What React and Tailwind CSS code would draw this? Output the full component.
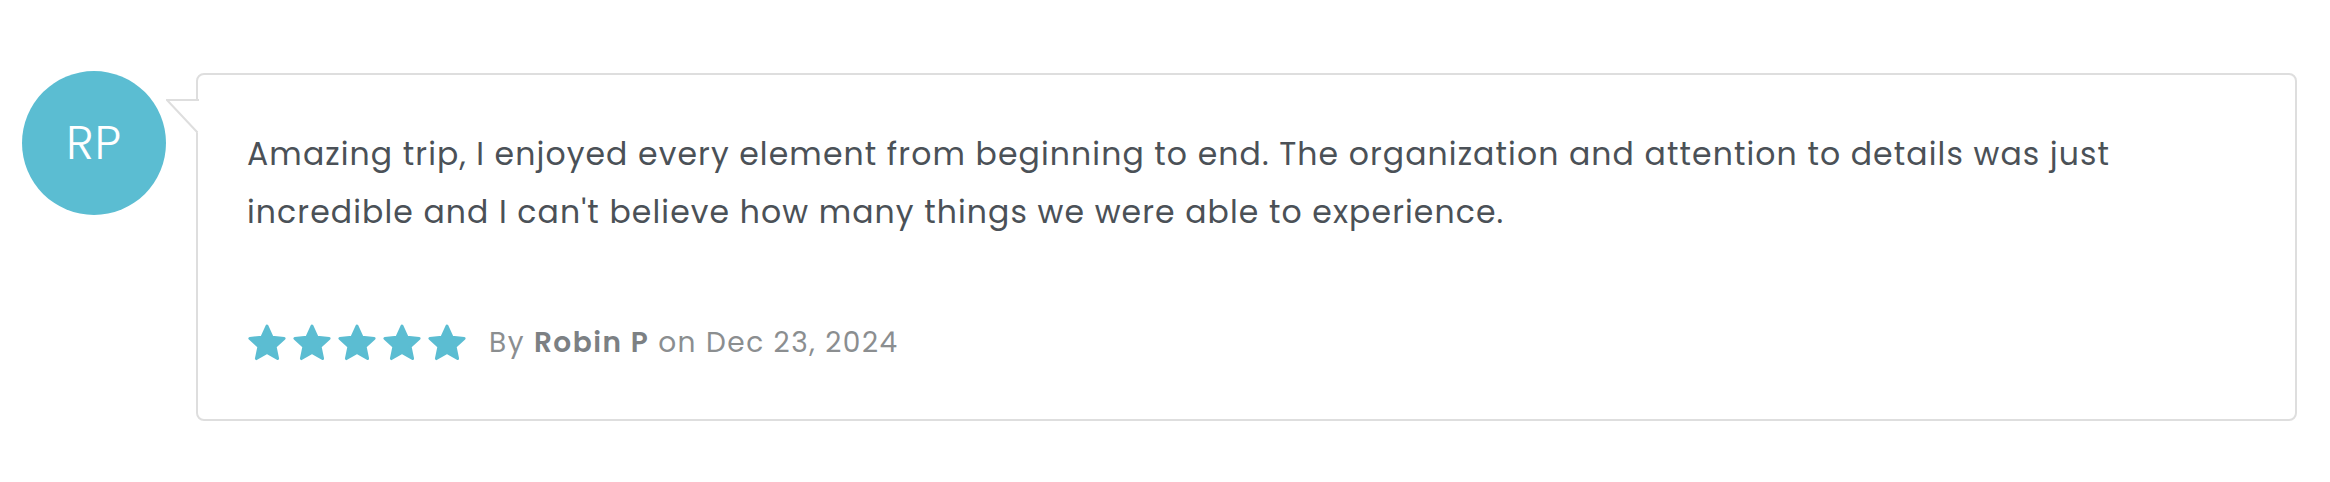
import React from "react";

const STAR =
  "20,3 25,14.12 37.12,15.44 28.08,23.63 30.58,35.56 20,29.5 9.42,35.56 11.92,23.63 2.88,15.44 15,14.12";

function Star() {
  return (
    <svg width="40" height="40" viewBox="0 0 40 40" className="shrink-0">
      <polygon
        points={STAR}
        fill="#5bbdd2"
        stroke="#5bbdd2"
        strokeWidth="3"
        strokeLinejoin="round"
      />
    </svg>
  );
}

export default function App() {
  const font = { fontFamily: '"Poppins", "Open Sans", sans-serif' };

  return (
    <div className="min-h-[482px] bg-white" style={font}>
      <div className="flex items-start pl-[22px] pr-[33px] pt-[71px]">
        {/* avatar */}
        <div className="flex h-[144px] w-[144px] shrink-0 items-center justify-center rounded-full bg-[#5bbdd2] text-[47px] font-light tracking-[1px] text-white">
          RP
        </div>

        {/* review bubble */}
        <article className="relative ml-[30px] mt-[2px] flex-1 rounded-[8px] border-2 border-[#dedede] bg-white pb-[55px] pl-[49px] pr-[48px] pt-[50px]">
          <svg
            width="34"
            height="38"
            viewBox="0 0 34 38"
            className="absolute left-[-32px] top-[23px]"
          >
            <polygon points="1,2 34,2 34,37" fill="#ffffff" />
            <path
              d="M33 2 H1 L31.5 34.5"
              fill="none"
              stroke="#dedede"
              strokeWidth="2"
            />
          </svg>

          <p className="text-[31.5px] leading-[58px] tracking-[1.1px] text-[#4b5157]">
            Amazing trip, I enjoyed every element from beginning to end. The
            organization and attention to details was just incredible and I
            can't believe how many things we were able to experience.
          </p>

          <div className="mt-[81px] flex h-[42px] items-center">
            <div className="flex gap-[5px]">
              <Star />
              <Star />
              <Star />
              <Star />
              <Star />
            </div>
            <p className="ml-[22px] text-[28px] tracking-[1.5px] text-[#8b8e90]">
              By <strong className="font-semibold text-[#7c8083]">Robin P</strong> on Dec 23, 2024
            </p>
          </div>
        </article>
      </div>
    </div>
  );
}
